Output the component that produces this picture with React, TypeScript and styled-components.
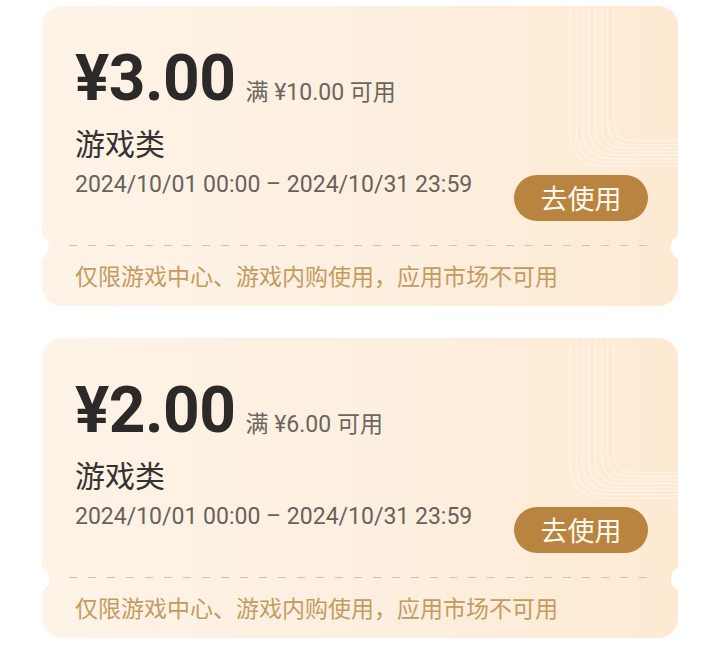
import React from "react";
import styled, { createGlobalStyle } from "styled-components";

const GlobalStyle = createGlobalStyle`
  body {
    margin: 0;
    background: #ffffff;
    font-family: "Roboto", "Noto Sans CJK SC", sans-serif;
  }
`;

const List = styled.div`
  display: flex;
  flex-direction: column;
  gap: 32px;
  padding: 6px 42px;
`;

const Card = styled.div`
  position: relative;
  height: 300px;
  border-radius: 20px;
  overflow: hidden;
  background: linear-gradient(90deg, #fdf3e7 0%, #fdefdf 55%, #fdead3 100%);

  &::before,
  &::after {
    content: "";
    position: absolute;
    top: 228px;
    width: 26px;
    height: 26px;
    border-radius: 50%;
    background: #ffffff;
  }
  &::before {
    left: -19px;
  }
  &::after {
    right: -19px;
  }
`;

const Lines = styled.svg`
  position: absolute;
  top: 0;
  right: 0;
  pointer-events: none;
`;

const Body = styled.div`
  position: relative;
  padding: 41px 30px 0 33px;
`;

const PriceRow = styled.div`
  display: flex;
  align-items: baseline;
  height: 64px;
`;

const Price = styled.span`
  font-family: "Roboto", sans-serif;
  font-size: 64px;
  font-weight: 700;
  line-height: 64px;
  color: #2c2a28;
  letter-spacing: -0.5px;
`;

const Condition = styled.span`
  margin-left: 10px;
  font-size: 23px;
  line-height: 30px;
  color: #6b6560;
`;

const Title = styled.div`
  margin-top: 13px;
  font-family: "Noto Sans CJK SC", sans-serif;
  font-size: 30px;
  line-height: 36px;
  color: #35322f;
`;

const BottomRow = styled.div`
  margin-top: 12px;
  display: flex;
  justify-content: space-between;
  align-items: flex-start;
`;

const Period = styled.div`
  font-size: 23px;
  line-height: 26px;
  color: #67625d;
`;

const UseButton = styled.button`
  margin-top: 3px;
  width: 134px;
  height: 46px;
  border: none;
  border-radius: 23px;
  background: #b8843f;
  color: #fff8ee;
  font-family: "Noto Sans CJK SC", sans-serif;
  font-size: 27px;
  line-height: 46px;
  padding: 0;
`;

const Divider = styled.div`
  margin: 24px 26px 0 27px;
  height: 1px;
  background: repeating-linear-gradient(90deg, #d3c3ad 0 8px, transparent 8px 19px);
`;

const Note = styled.div`
  margin-top: 13px;
  padding-left: 33px;
  font-family: "Noto Sans CJK SC", sans-serif;
  font-size: 23px;
  line-height: 32px;
  color: #c49b5f;
`;

type Coupon = { amount: string; threshold: string };

const coupons: Coupon[] = [
  { amount: "3.00", threshold: "10.00" },
  { amount: "2.00", threshold: "6.00" },
];

const Decoration = () => {
  const paths = [];
  for (let i = 0; i < 8; i++) {
    const x = 42 + i * 6.3;
    const y = 160 - i * 3.6;
    const r = 34 - i * 2;
    paths.push(
      <path
        key={i}
        d={`M${x} 0 V${y - r} Q${x} ${y} ${x + r} ${y} H150`}
        fill="none"
        stroke="#ffffff"
        strokeOpacity={0.6}
        strokeWidth={1}
      />
    );
  }
  return (
    <Lines width="150" height="170" viewBox="0 0 150 170">
      {paths}
    </Lines>
  );
};

function CouponCard({ amount, threshold }: Coupon) {
  return (
    <Card>
      <Decoration />
      <Body>
        <PriceRow>
          <Price>¥{amount}</Price>
          <Condition>满 ¥{threshold} 可用</Condition>
        </PriceRow>
        <Title>游戏类</Title>
        <BottomRow>
          <Period>2024/10/01 00:00 – 2024/10/31 23:59</Period>
          <UseButton>去使用</UseButton>
        </BottomRow>
      </Body>
      <Divider />
      <Note>仅限游戏中心、游戏内购使用，应用市场不可用</Note>
    </Card>
  );
}

export default function App() {
  return (
    <>
      <GlobalStyle />
      <List>
        {coupons.map((c) => (
          <CouponCard key={c.amount} {...c} />
        ))}
      </List>
    </>
  );
}
